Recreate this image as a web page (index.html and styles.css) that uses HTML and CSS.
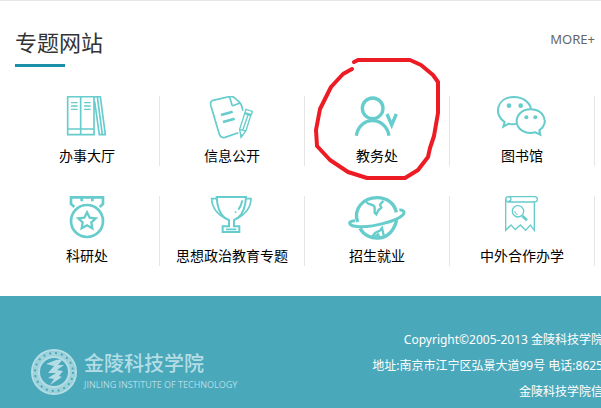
FILE: index.html
```html
<!DOCTYPE html>
<html lang="zh-CN">
<head>
    <meta charset="UTF-8">
    <meta name="viewport" content="width=device-width, initial-scale=1.0">
    <title>专题网站</title>
    <link rel="stylesheet" href="styles.css">
</head>
<body>
    <main class="topics">
        <div class="topics-header">
            <h2>专题网站</h2>
            <a class="more" href="#">MORE+</a>
        </div>

        <div class="topics-grid">
            <a class="topic" href="#">
                <svg class="icon" viewBox="21 33 180 150">
                    <path d="M53 35H132V149H53ZM92 35V149M53 132H132M132 35H151L166 149H148L134 50M142 35L157 149" stroke-width="5"/>
                    <path d="M63 53H83M63 63H83M63 73H83M102 53H122M102 63H122M102 73H122" stroke-width="4"/>
                </svg>
                <span>办事大厅</span>
            </a>
            <a class="topic" href="#">
                <svg class="icon" viewBox="36 33 180 150">
                    <path d="M145 143L105 157Q92 160 88 148L62 60Q60 49 69 46L117 35Q126 32 133 38L149 52Q153 56 155 63L159 77M119 36L126 60Q127 63 132 61L150 54" stroke-width="5"/>
                    <path d="M93 90L128 80M99 111L134 101" stroke-width="8"/>
                    <path d="M168 73L187 79L184 89L165 83ZM164 86L182 92L168 137L153 157L149 133ZM174 90L158 136M151 134L168 138" stroke-width="4"/>
                    <path d="M152 148L160 150L153 157Z" fill="currentColor" stroke-width="1"/>
                </svg>
                <span>信息公开</span>
            </a>
            <a class="topic" href="#">
                <svg class="icon" viewBox="126 138 180 150">
                    <circle cx="203" cy="175" r="31" stroke-width="10"/>
                    <path d="M154 257C163 197 242 197 252 257" stroke-width="10"/>
                    <path d="M246 192L260 225L274 192" stroke-width="10"/>
                </svg>
                <span>教务处</span>
            </a>
            <a class="topic" href="#">
                <svg class="icon" viewBox="36 33 180 150">
                    <path d="M111 115Q98 120 86 116L70 125L74 111C38 88 52 36 102 36C128 36 149 51 153 72" stroke-width="6"/>
                    <path d="M178 136C210 112 190 73 152 73C125 73 110 91 110 109C110 134 138 150 166 142L181 149Z" stroke-width="6"/>
                    <g fill="currentColor" stroke="none">
                        <circle cx="87" cy="62" r="7"/>
                        <circle cx="122" cy="62" r="7"/>
                        <circle cx="139" cy="97" r="6"/>
                        <circle cx="166" cy="97" r="6"/>
                    </g>
                </svg>
                <span>图书馆</span>
            </a>
            <a class="topic" href="#">
                <svg class="icon" viewBox="21 33 180 150">
                    <circle cx="111" cy="108" r="48" stroke-width="8"/>
                    <path d="M73 66L63 57V37H159V57L149 66M95 36V49M127 36V49" stroke-width="8"/>
                    <path d="M111 82L119 98L137 100L124 112L127 130L111 121L95 130L98 112L85 100L103 98Z" stroke-width="7"/>
                </svg>
                <span>科研处</span>
            </a>
            <a class="topic" href="#">
                <svg class="icon" viewBox="96 33 180 150">
                    <path d="M140 36H228Q226 82 203 99L192 105V124H208V141H158V124H177V105L165 99Q142 82 140 36Z" stroke-width="6"/>
                    <path d="M139 41H125Q126 80 170 102M229 41H243Q242 80 198 102M168 133H199" stroke-width="5"/>
                    <path d="M217 46Q214 62 205 74M198 80L195 83" stroke-width="6"/>
                </svg>
                <span>思想政治教育专题</span>
            </a>
            <a class="topic" href="#">
                <svg class="icon" viewBox="51 33 180 150">
                    <path d="M83 111C69 72 99 38 141 38C173 38 194 57 199 82M90 130C112 170 183 176 200 105" stroke-width="10"/>
                    <path d="M75 107C50 109 55 124 87 125C132 127 203 107 219 89C226 81 220 73 208 75" stroke-width="9"/>
                    <path d="M109 51C115 62 133 55 134 68V83L139 88L145 76L154 68L150 59L160 47M126 155L136 143L150 137L156 129L161 151" stroke-width="7"/>
                    <path d="M132 153L145 144L151 156Z" fill="currentColor" stroke-width="2"/>
                </svg>
                <span>招生就业</span>
            </a>
            <a class="topic" href="#">
                <svg class="icon" viewBox="66 33 180 150">
                    <path d="M107 42V136L123 120L136 134L151 120L167 136L181 120L193 136V52" stroke-width="4"/>
                    <path d="M115 35H195Q202 36 202 43Q202 51 194 51H115Q107 51 107 43Q107 35 115 35Q123 36 123 43Q122 49 116 47" stroke-width="4"/>
                    <circle cx="144" cy="79" r="17" stroke-width="4"/>
                    <path d="M134 78Q135 87 143 89" stroke-width="3"/>
                    <path d="M157 93L171 106" stroke-width="8"/>
                </svg>
                <span>中外合作办学</span>
            </a>

            <!-- hand-drawn ring around 教务处 -->
            <svg class="marker" viewBox="310 55 134 128">
                <path d="M354 62L358 60H410L421 65L433 75L438 82V113L434 136L430 148L428 157L418 170L405 178H367L348 172L330 160L317 146L316 130L320 109L331 87L343 74L352 69"/>
            </svg>
        </div>
    </main>

    <footer class="footer">
        <div class="logo">
            <svg class="emblem" viewBox="0 0 48 48">
                <circle cx="24" cy="24" r="22" stroke-width="2"/>
                <circle cx="24" cy="24" r="18" stroke-width="6" opacity="0.8"/>
                <circle cx="24" cy="24" r="15" stroke-width="2"/>
                <circle class="emblem-marks" cx="24" cy="24" r="19"/>
                <path d="M16 16L26 12L33 11L28 17L34 17L27 22L33 23L29 28L32 29L20 37L24 31L18 30L26 25L18 25L24 18Z" fill="currentColor" stroke="none"/>
            </svg>
            <div class="logo-text">
                <strong>金陵科技学院</strong>
                <span>JINLING INSTITUTE OF TECHNOLOGY</span>
            </div>
        </div>
        <div class="copyright">
            <p>Copyright©2005-2013 金陵科技学院</p>
            <p>地址:南京市江宁区弘景大道99号 电话:8625</p>
            <p>金陵科技学院信</p>
        </div>
    </footer>
</body>
</html>
```
FILE: styles.css
```css
body {
    font-family: "Noto Sans", "Noto Sans CJK SC", sans-serif;
    margin: 0;
    background-color: #fff;
    color: #000;
    overflow-x: hidden;
}

a {
    color: inherit;
    text-decoration: none;
}

.topics {
    border-top: 1px solid #e6e6e6;
    padding: 27px 6px 30px 15px;
}

.topics-header {
    display: flex;
    justify-content: space-between;
    align-items: flex-start;
    margin-bottom: 29px;
}

.topics-header h2 {
    margin: 0;
    font-size: 22px;
    line-height: 28px;
    font-weight: normal;
    color: #333;
}

.topics-header h2::after {
    content: "";
    display: block;
    width: 50px;
    height: 3px;
    margin-top: 8px;
    background-color: #1a91a9;
}

.more {
    font-size: 13px;
    line-height: 22px;
    color: #666;
}

.topics-grid {
    position: relative;
    display: grid;
    grid-template-columns: repeat(4, 1fr);
    row-gap: 30px;
}

.topic {
    display: flex;
    flex-direction: column;
    align-items: center;
    border-right: 1px solid #e6e6e6;
    font-size: 14px;
    line-height: 20px;
}

.icon {
    width: 60px;
    height: 50px;
    color: #66cccc;
}

.icon,
.emblem {
    fill: none;
    stroke: currentColor;
}

.marker {
    position: absolute;
    left: 295px;
    top: -41px;
    width: 134px;
    height: 128px;
    fill: none;
    stroke: #ed1c24;
    stroke-width: 4px;
    stroke-linejoin: round;
    stroke-linecap: round;
    pointer-events: none;
}

.footer {
    display: flex;
    justify-content: space-between;
    align-items: flex-end;
    height: 112px;
    padding-left: 30px;
    background-color: #4aa8bb;
    overflow: hidden;
}

.logo {
    display: flex;
    align-items: center;
    gap: 6px;
    padding-bottom: 12px;
    color: #b4dde5;
}

.emblem {
    width: 48px;
    height: 48px;
}

.emblem-marks {
    stroke: #4aa8bb;
    stroke-width: 2px;
    stroke-dasharray: 2 4;
}

.logo-text {
    display: flex;
    flex-direction: column;
    white-space: nowrap;
}

.logo-text strong {
    font-size: 20px;
    line-height: 26px;
    font-weight: 500;
}

.logo-text span {
    font-family: "Open Sans", sans-serif;
    font-size: 9px;
    line-height: 16px;
}

.copyright {
    margin-right: -2px;
    padding-bottom: 3px;
    color: #fff;
    font-size: 12px;
    line-height: 26px;
    text-align: right;
    white-space: nowrap;
}

.copyright p {
    margin: 0;
}
```
